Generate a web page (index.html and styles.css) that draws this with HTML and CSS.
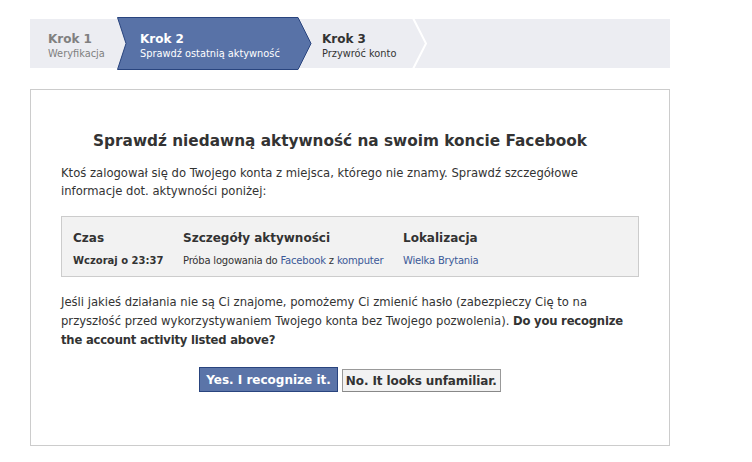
FILE: index.html
```html
<!DOCTYPE html>
<html lang="pl">
<head>
  <meta charset="UTF-8">
  <title>Sprawdź niedawną aktywność</title>
  <link rel="stylesheet" href="styles.css">
</head>
<body>
  <div class="page">
    <div class="steps">
      <svg class="steps-bg" width="640" height="49" viewBox="0 0 640 49">
        <polygon points="87.5,-1.5 268,-1.5 281,24.5 268,50.5 87.5,50.5 96,24.5" fill="#5872a7" stroke="#29447e" stroke-width="1"/>
        <polyline points="383,-1 396,24.5 383,50" fill="none" stroke="#fff" stroke-width="2"/>
      </svg>
      <div class="step done">
        <div class="step-title">Krok 1</div>
        <div class="step-sub">Weryfikacja</div>
      </div>
      <div class="step active">
        <div class="step-title">Krok 2</div>
        <div class="step-sub">Sprawdź ostatnią aktywność</div>
      </div>
      <div class="step">
        <div class="step-title">Krok 3</div>
        <div class="step-sub">Przywróć konto</div>
      </div>
    </div>

    <div class="box">
      <h2>Sprawdź niedawną aktywność na swoim koncie Facebook</h2>
      <p class="intro">Ktoś zalogował się do Twojego konta z miejsca, którego nie znamy. Sprawdź szczegółowe<br>informacje dot. aktywności poniżej:</p>

      <div class="activity">
        <div class="row head">
          <div class="col-time">Czas</div>
          <div class="col-detail">Szczegóły aktywności</div>
          <div class="col-place">Lokalizacja</div>
        </div>
        <div class="row">
          <div class="col-time"><b>Wczoraj o 23:37</b></div>
          <div class="col-detail">Próba logowania do <a href="#">Facebook</a> z <a href="#">komputer</a></div>
          <div class="col-place"><a href="#">Wielka Brytania</a></div>
        </div>
      </div>

      <p class="question">Jeśli jakieś działania nie są Ci znajome, pomożemy Ci zmienić hasło (zabezpieczy Cię to na<br>przyszłość przed wykorzystywaniem Twojego konta bez Twojego pozwolenia). <b>Do you recognize<br>the account activity listed above?</b></p>

      <div class="actions">
        <button class="btn btn-blue">Yes. I recognize it.</button>
        <button class="btn btn-gray">No. It looks unfamiliar.</button>
      </div>
    </div>
  </div>
</body>
</html>
```

FILE: styles.css
```css
body {
  margin: 0;
  background: #fff;
  font-family: 'DejaVu Sans', Verdana, sans-serif;
  color: #333;
}

.page {
  padding: 19px 0 0 30px;
  width: 640px;
}

.steps {
  position: relative;
  display: flex;
  height: 49px;
  background: #ecedf2;
}

.steps-bg {
  position: absolute;
  left: 0;
  top: 0;
  overflow: visible;
}

.step {
  position: relative;
  padding: 13px 0 0 18px;
  box-sizing: border-box;
}

.step.done {
  width: 92px;
  color: #808080;
}

.step.active {
  width: 182px;
  color: #fff;
}

.step-title {
  font-size: 12px;
  font-weight: bold;
  line-height: 15px;
}

.step-sub {
  font-size: 9.8px;
  line-height: 13px;
}

.box {
  box-sizing: border-box;
  margin-top: 21px;
  border: 1px solid #ccc;
  height: 357px;
  padding: 41px 30px 0 30px;
}

h2 {
  margin: 0 0 13px;
  padding-right: 20px;
  text-align: center;
  font-size: 15.3px;
  line-height: 20px;
  color: #333;
}

p {
  margin: 0;
  font-size: 11.6px;
  line-height: 18px;
  white-space: nowrap;
}

p.question {
  line-height: 19px;
}

p b {
  letter-spacing: -0.2px;
}

.activity {
  margin: 16px 0 16px;
  border: 1px solid #ccc;
  background: #f2f2f2;
  padding: 13px 11px 8px;
}

.row {
  display: flex;
  font-size: 10px;
  line-height: 14px;
  letter-spacing: -0.2px;
}

.row b {
  letter-spacing: 0;
}

.row.head {
  font-size: 12px;
  font-weight: bold;
  line-height: 16px;
  letter-spacing: 0;
  margin-bottom: 8px;
}

.col-time {
  width: 110px;
}

.col-detail {
  width: 220px;
}

a {
  color: #3b5998;
  text-decoration: none;
}

.actions {
  display: flex;
  justify-content: center;
  align-items: flex-end;
  gap: 4px;
  margin-top: 17px;
}

.btn {
  font-family: 'DejaVu Sans', Verdana, sans-serif;
  font-size: 12px;
  font-weight: bold;
  padding: 0 6px;
  cursor: pointer;
}

.btn-blue {
  height: 25px;
  background: #5b74a8;
  color: #fff;
  border: 1px solid #29447e;
}

.btn-gray {
  height: 23px;
  padding: 0 3px;
  letter-spacing: -0.1px;
  background: #f2f2f2;
  color: #333;
  border: 1px solid #999;
  border-bottom-color: #888;
}
```
